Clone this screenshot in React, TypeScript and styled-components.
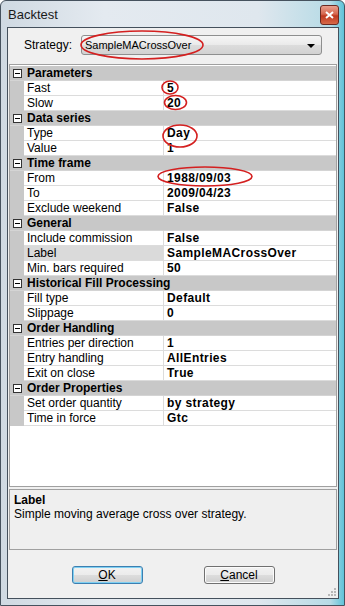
import styled, { createGlobalStyle } from "styled-components";

interface Property {
  name: string;
  value: string;
  selected?: boolean;
}

interface Category {
  title: string;
  items: Property[];
}

const categories: Category[] = [
  { title: "Parameters", items: [{ name: "Fast", value: "5" }, { name: "Slow", value: "20" }] },
  { title: "Data series", items: [{ name: "Type", value: "Day" }, { name: "Value", value: "1" }] },
  {
    title: "Time frame",
    items: [
      { name: "From", value: "1988/09/03" },
      { name: "To", value: "2009/04/23" },
      { name: "Exclude weekend", value: "False" },
    ],
  },
  {
    title: "General",
    items: [
      { name: "Include commission", value: "False" },
      { name: "Label", value: "SampleMACrossOver", selected: true },
      { name: "Min. bars required", value: "50" },
    ],
  },
  {
    title: "Historical Fill Processing",
    items: [
      { name: "Fill type", value: "Default" },
      { name: "Slippage", value: "0" },
    ],
  },
  {
    title: "Order Handling",
    items: [
      { name: "Entries per direction", value: "1" },
      { name: "Entry handling", value: "AllEntries" },
      { name: "Exit on close", value: "True" },
    ],
  },
  {
    title: "Order Properties",
    items: [
      { name: "Set order quantity", value: "by strategy" },
      { name: "Time in force", value: "Gtc" },
    ],
  },
];

// red marker ellipses drawn over the screenshot
const marks = [
  { cx: 142, cy: 45, rx: 61, ry: 14 },
  { cx: 170, cy: 87.5, rx: 8, ry: 6.5 },
  { cx: 175.5, cy: 102.5, rx: 11, ry: 7 },
  { cx: 180, cy: 136, rx: 17, ry: 11 },
  { cx: 205, cy: 176.5, rx: 47, ry: 9.5 },
];

export default function App() {
  return (
    <>
      <GlobalStyle />
      <StWindow>
        <StTitleBar>
          <StTitle>Backtest</StTitle>
          <StClose>
            <svg width="9" height="8" viewBox="0 0 9 8">
              <path d="M1 1 L8 7 M8 1 L1 7" stroke="#fff" strokeWidth="2" />
            </svg>
          </StClose>
        </StTitleBar>
        <StClient>
          <StStrategyRow>
            <StLabel>Strategy:</StLabel>
            <StCombo>
              <span>SampleMACrossOver</span>
              <StArrow />
            </StCombo>
          </StStrategyRow>
          <StGrid>
            {categories.map((cat) => (
              <div key={cat.title}>
                <StCategoryRow>
                  <StGutter>
                    <StExpander />
                  </StGutter>
                  <StCategoryTitle>{cat.title}</StCategoryTitle>
                </StCategoryRow>
                {cat.items.map((item) => (
                  <StPropRow key={item.name}>
                    <StGutter />
                    <StName $selected={item.selected}>{item.name}</StName>
                    <StValue>{item.value}</StValue>
                  </StPropRow>
                ))}
              </div>
            ))}
          </StGrid>
          <StHelp>
            <StHelpTitle>Label</StHelpTitle>
            <StHelpText>Simple moving average cross over strategy.</StHelpText>
          </StHelp>
          <StButtons>
            <StButton $focused>
              <u>O</u>K
            </StButton>
            <StButton>
              <u>C</u>ancel
            </StButton>
          </StButtons>
          <StGrip width="8" height="8" viewBox="0 0 8 8">
            {[
              [6, 0],
              [6, 3],
              [3, 3],
              [6, 6],
              [3, 6],
              [0, 6],
            ].map(([x, y]) => (
              <rect key={`${x}-${y}`} x={x} y={y} width="2" height="2" fill="#b8b8b8" />
            ))}
          </StGrip>
        </StClient>
        <StMarks width="345" height="606">
          {marks.map((m, i) => (
            <ellipse key={i} cx={m.cx} cy={m.cy} rx={m.rx} ry={m.ry} fill="none" stroke="#d42020" strokeWidth="1.6" />
          ))}
        </StMarks>
      </StWindow>
    </>
  );
}

const GlobalStyle = createGlobalStyle`
  body {
    margin: 0;
    background: #ffffff;
    font-family: "Liberation Sans", Arial, sans-serif;
    font-size: 12px;
    color: #000;
  }
`;

const StWindow = styled.div`
  position: relative;
  box-sizing: border-box;
  display: flex;
  flex-direction: column;

  width: 345px;
  height: 606px;

  border: 1px solid #46525e;
  border-radius: 6px 6px 0 0;
  background: linear-gradient(90deg, #cfd9e2 0%, #e4eaf0 30%, #dfe7ee 75%, #b7dbe6 96%, #5fc3d9 100%);
`;

const StTitleBar = styled.div`
  display: flex;
  justify-content: space-between;
  align-items: flex-start;

  height: 26px;
  padding: 0 5px 0 7px;
`;

const StTitle = styled.span`
  margin-top: 6px;
  font-size: 13px;
  color: #1a1a1a;
`;

const StClose = styled.div`
  display: flex;
  justify-content: center;
  align-items: center;

  width: 17px;
  height: 18px;
  margin-top: 4px;

  border: 1px solid #6a2a22;
  border-radius: 3px;
  background: linear-gradient(180deg, #e8a08e 0%, #d6664e 45%, #c0381e 55%, #d76a4a 100%);
`;

const StClient = styled.div`
  position: relative;
  display: flex;
  flex-direction: column;
  flex: 1;

  margin: 0 5px 6px 6px;
  padding: 0 1px;

  border: 1px solid #44505c;
  background: #f0f0f0;
`;

const StStrategyRow = styled.div`
  display: flex;
  align-items: center;

  height: 20px;
  margin: 7px 0 9px;
`;

const StLabel = styled.span`
  box-sizing: border-box;
  width: 72px;
  padding-left: 15px;
`;

const StCombo = styled.div`
  display: flex;
  justify-content: space-between;
  align-items: center;
  box-sizing: border-box;

  width: 241px;
  height: 20px;
  padding: 0 6px 0 3px;

  border: 1px solid #8e8f8f;
  border-radius: 3px;
  background: linear-gradient(180deg, #f6f6f6 0%, #eaeaea 50%, #dcdcdc 51%, #d2d2d2 100%);
  font-size: 11px;
`;

const StArrow = styled.span`
  width: 0;
  height: 0;
  margin-top: 2px;

  border-left: 4px solid transparent;
  border-right: 4px solid transparent;
  border-top: 4px solid #000;
`;

const StGrid = styled.div`
  box-sizing: border-box;
  height: 423px;
  padding-top: 1px;

  border: 1px solid #a0a0a0;
  background: #fff;
`;

const StCategoryRow = styled.div`
  display: flex;
  align-items: center;

  height: 15px;

  background: #c8c8c8;
  border-bottom: 1px solid #d4d4d4;
  box-sizing: border-box;
`;

const StGutter = styled.div`
  display: flex;
  justify-content: center;
  align-items: center;
  flex-shrink: 0;

  width: 14px;
  height: 100%;

  background: #c8c8c8;
`;

const StExpander = styled.span`
  position: relative;
  box-sizing: border-box;
  width: 9px;
  height: 9px;

  border: 1px solid #333;
  background: #fff;

  &::after {
    content: "";
    position: absolute;
    left: 1px;
    top: 3px;
    width: 5px;
    height: 1px;
    background: #000;
  }
`;

const StCategoryTitle = styled.span`
  padding-left: 3px;
  font-weight: bold;
  white-space: nowrap;
`;

const StPropRow = styled.div`
  display: flex;
  height: 15px;
`;

const StName = styled.div<{ $selected?: boolean }>`
  box-sizing: border-box;
  width: 140px;
  padding-left: 3px;
  line-height: 14px;

  border-bottom: 1px solid #dcdcdc;
  border-right: 1px solid #dcdcdc;
  background: ${({ $selected }) => ($selected ? "#dadada" : "#fff")};
  white-space: nowrap;
`;

const StValue = styled.div`
  box-sizing: border-box;
  flex: 1;
  padding-left: 3px;
  line-height: 14px;

  border-bottom: 1px solid #dcdcdc;
  font-weight: bold;
  letter-spacing: 0.4px;
  white-space: nowrap;
`;

const StHelp = styled.div`
  box-sizing: border-box;
  height: 61px;
  margin-top: 2px;
  padding: 3px 4px;

  border: 1px solid #a0a0a0;
  background: #efefef;
`;

const StHelpTitle = styled.div`
  font-weight: bold;
  line-height: 14px;
`;

const StHelpText = styled.div`
  line-height: 15px;
`;

const StButtons = styled.div`
  display: flex;
  justify-content: center;
  gap: 61px;

  margin-top: 16px;
`;

const StButton = styled.button<{ $focused?: boolean }>`
  box-sizing: border-box;
  width: 71px;
  height: 18px;
  padding: 0;

  border: 1px solid ${({ $focused }) => ($focused ? "#3c7fb1" : "#707070")};
  border-radius: 3px;
  box-shadow: ${({ $focused }) => ($focused ? "inset 0 0 0 1px #7fd0f2" : "inset 0 0 0 1px #fbfbfb")};
  background: linear-gradient(180deg, #f2f2f2 0%, #ebebeb 50%, #dddddd 51%, #cfcfcf 100%);

  font-family: "Liberation Sans", Arial, sans-serif;
  font-size: 12px;
  color: #000;

  u {
    text-decoration-thickness: 1px;
  }
`;

const StGrip = styled.svg`
  position: absolute;
  right: 2px;
  bottom: 2px;
`;

const StMarks = styled.svg`
  position: absolute;
  left: -1px;
  top: -1px;
  pointer-events: none;
`;
